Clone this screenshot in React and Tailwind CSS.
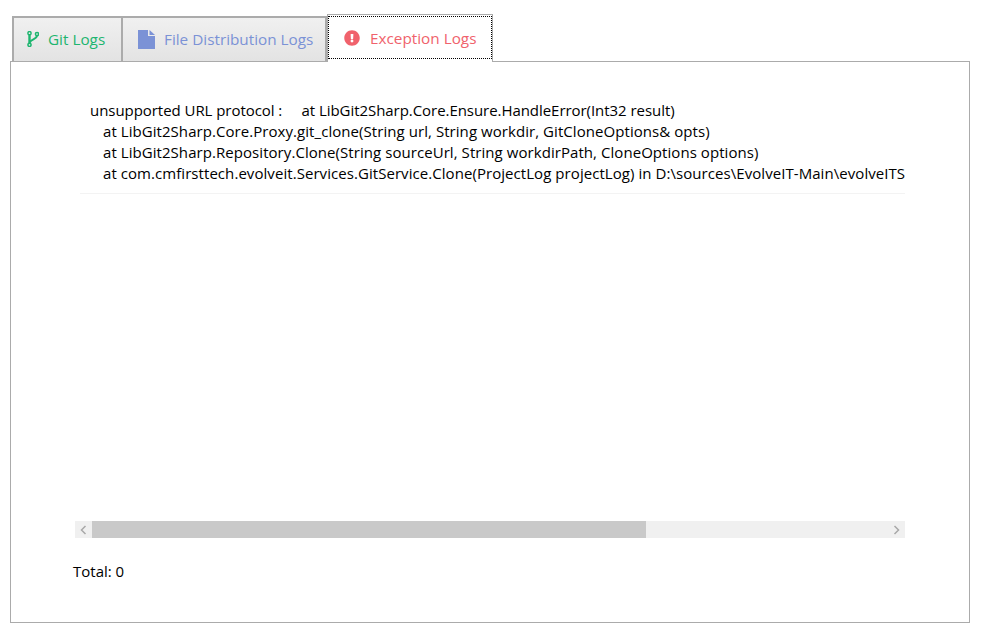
import { FaExclamationCircle } from 'react-icons/fa';

const logLines = [
  'at LibGit2Sharp.Core.Proxy.git_clone(String url, String workdir, GitCloneOptions& opts)',
  'at LibGit2Sharp.Repository.Clone(String sourceUrl, String workdirPath, CloneOptions options)',
  'at com.cmfirsttech.evolveit.Services.GitService.Clone(ProjectLog projectLog) in D:\\sources\\EvolveIT-Main\\evolveITServices\\Services\\GitService.cs:line 42',
];

export default function App() {
  return (
    <div className="w-[993px] h-[631px] bg-white overflow-hidden pt-[14px] pl-[10px] font-['Open_Sans','Noto_Sans',sans-serif] text-[15px]">
      {/* tabs */}
      <div className="flex items-end h-[48px] pl-[2px] relative z-10 -mb-px">
        <div className="flex items-center w-[110px] h-[46px] pl-[13px] border-2 border-r border-b border-[#ababab] bg-gradient-to-b from-[#f0f0f0] to-[#e3e3e3] text-[#1db56f] text-[15.3px]">
          <svg width="12" height="16" viewBox="0 0 12 16" fill="none" stroke="currentColor" className="mr-[9px] -mt-[2px]">
            <circle cx="2.500" cy="2.200" r="1.600" strokeWidth="1.500" />
            <circle cx="10" cy="3" r="1.600" strokeWidth="1.500" />
            <circle cx="2.500" cy="13.800" r="1.600" strokeWidth="1.500" />
            <path d="M2.500 4v8" strokeWidth="2.400" />
            <path d="M10 4.600C10 8.500 3.500 8 2.800 11.500" strokeWidth="2" />
          </svg>
          <span>Git Logs</span>
        </div>
        <div className="flex items-center w-[205px] h-[46px] pl-[15px] border-2 border-l border-b border-[#ababab] bg-gradient-to-b from-[#f0f0f0] to-[#e3e3e3] text-[#7b92d6] text-[15.3px]">
          <svg width="17" height="19" viewBox="0 0 17 19" fill="currentColor" className="mr-[9px]">
            <path d="M0 0h10v6h7v13H0z" />
            <path d="M11.500 0L17 5h-5.500z" />
          </svg>
          <span>File Distribution Logs</span>
        </div>
        <div className="w-[166px] h-[48px] pt-px border border-b-0 border-[#ababab] bg-white">
          <div className="flex items-center h-[43px] pl-[15px] pt-[2px] border border-dotted border-black text-[#f0626c] text-[15.3px]">
            <FaExclamationCircle className="w-[16px] h-[16px] mr-[10px] -mt-[2px]" />
            <span>Exception Logs</span>
          </div>
        </div>
      </div>

      {/* panel */}
      <div className="w-[960px] h-[562px] border border-[#ababab] bg-white pt-[32px] pl-[62px] flex flex-col">
        <div className="w-[825px] h-[100px] overflow-hidden ml-[7px] border-b border-[#f3f3f3] pl-[10px] pt-[6px] whitespace-pre text-black leading-[21px]">
          <div className="tracking-[-0.05px]">unsupported URL protocol :     at LibGit2Sharp.Core.Ensure.HandleError(Int32 result)</div>
          {logLines.map((line) => (
            <div key={line} className="pl-[13px] tracking-[0.06px]">{line}</div>
          ))}
        </div>

        {/* horizontal scrollbar */}
        <div className="flex items-center w-[830px] h-[17px] ml-[2px] mt-[327px] bg-[#f0f0f0]">
          <div className="flex items-center justify-center w-[17px] h-[17px]">
            <svg width="7" height="10" viewBox="0 0 7 10" fill="none" stroke="#a8a8a8" strokeWidth="1.500">
              <path d="M5.500 1L1.500 5l4 4" />
            </svg>
          </div>
          <div className="w-[554px] h-[17px] bg-[#c9c9c9]" />
          <div className="flex-1" />
          <div className="flex items-center justify-center w-[17px] h-[17px]">
            <svg width="7" height="10" viewBox="0 0 7 10" fill="none" stroke="#a8a8a8" strokeWidth="1.500">
              <path d="M1.500 1l4 4-4 4" />
            </svg>
          </div>
        </div>

        <div className="mt-[23px] text-black leading-[21px]">Total: 0</div>
      </div>
    </div>
  );
}
